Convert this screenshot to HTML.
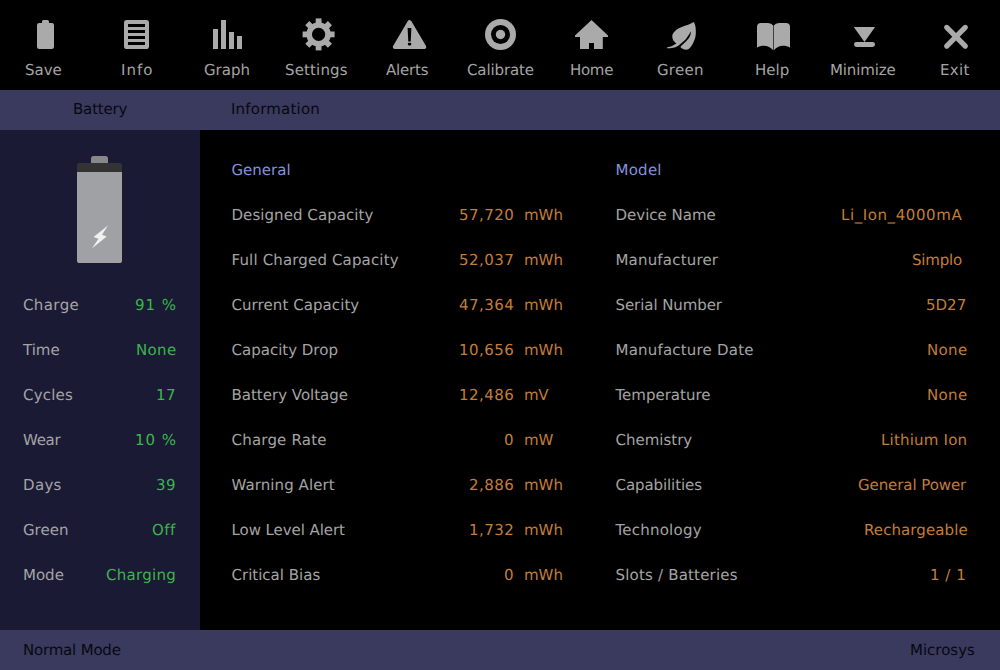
<!DOCTYPE html>
<html><head><meta charset="utf-8"><title>Battery Information</title>
<style>
html,body{margin:0;padding:0;background:#000;}
body{width:1000px;height:670px;position:relative;overflow:hidden;font-family:"DejaVu Sans","Liberation Sans",sans-serif;font-size:15px;color:#a4a4a4;text-rendering:geometricPrecision;}
.t{position:absolute;white-space:nowrap;line-height:20px;height:20px;}
#top{position:absolute;left:0;top:0;width:1000px;height:90px;background:#000;}
#hdr{position:absolute;left:0;top:90px;width:1000px;height:40px;background:#393a5e;}
#side{position:absolute;left:0;top:130px;width:200px;height:500px;background:#1a1a35;}
#main{position:absolute;left:200px;top:130px;width:800px;height:500px;background:#000;}
#foot{position:absolute;left:0;top:630px;width:1000px;height:40px;background:#393a5e;}
svg{position:absolute;overflow:visible;}
.g{color:#3bb54a}.o{color:#c27d3a}.b{color:#8292dd}.d{color:#08080f}
</style></head><body>
<div id="top"></div><div id="hdr"></div><div id="side"></div><div id="main"></div><div id="foot"></div>

<nav class="toolbar">
<div class="t" style="left:25.00px;top:60px;">Save</div>
<div class="t" style="left:121.00px;top:60px;letter-spacing:1.00px;">Info</div>
<div class="t" style="left:204.00px;top:60px;">Graph</div>
<div class="t" style="left:285.00px;top:60px;letter-spacing:0.14px;">Settings</div>
<div class="t" style="left:386.00px;top:60px;letter-spacing:-0.20px;">Alerts</div>
<div class="t" style="left:467.00px;top:60px;letter-spacing:-0.12px;">Calibrate</div>
<div class="t" style="left:570.00px;top:60px;letter-spacing:-0.30px;">Home</div>
<div class="t" style="left:657.00px;top:60px;letter-spacing:0.25px;">Green</div>
<div class="t" style="left:755.00px;top:60px;">Help</div>
<div class="t" style="left:830.00px;top:60px;letter-spacing:-0.14px;">Minimize</div>
<div class="t" style="left:940.00px;top:60px;letter-spacing:0.33px;">Exit</div>
</nav>
<header class="titlebar">
<div class="t d" style="left:73.00px;top:99px;letter-spacing:-0.17px;">Battery</div>
<div class="t d" style="left:231.00px;top:99px;letter-spacing:0.20px;">Information</div>
</header>
<footer class="statusbar">
<div class="t d" style="left:23.00px;top:640px;letter-spacing:-0.20px;">Normal Mode</div>
<div class="t d" style="left:910.00px;top:640px;">Microsys</div>
</footer>
<aside class="sidebar">
<div class="t" style="left:23.00px;top:295px;letter-spacing:0.40px;">Charge</div>
<div class="t g" style="left:135.00px;top:295px;letter-spacing:1.00px;">91 %</div>
<div class="t" style="left:23.00px;top:340px;">Time</div>
<div class="t g" style="left:136.00px;top:340px;letter-spacing:0.33px;">None</div>
<div class="t" style="left:23.00px;top:385px;letter-spacing:0.20px;">Cycles</div>
<div class="t g" style="left:156.00px;top:385px;letter-spacing:0.46px;">17</div>
<div class="t" style="left:23.00px;top:430px;letter-spacing:-0.30px;">Wear</div>
<div class="t g" style="left:135.00px;top:430px;letter-spacing:1.00px;">10 %</div>
<div class="t" style="left:23.00px;top:475px;letter-spacing:0.33px;">Days</div>
<div class="t g" style="left:156.00px;top:475px;letter-spacing:0.46px;">39</div>
<div class="t" style="left:23.00px;top:520px;">Green</div>
<div class="t g" style="left:152.00px;top:520px;letter-spacing:0.50px;">Off</div>
<div class="t" style="left:23.00px;top:565px;">Mode</div>
<div class="t g" style="left:106.00px;top:565px;letter-spacing:0.29px;">Charging</div>
</aside>
<main class="info">
<div class="t b" style="left:231.50px;top:160px;">General</div>
<div class="t b" style="left:615.50px;top:160px;letter-spacing:0.25px;">Model</div>
<div class="t" style="left:231.50px;top:205px;letter-spacing:0.06px;">Designed Capacity</div>
<div class="t o" style="left:459.00px;top:205px;letter-spacing:0.46px;">57,720</div>
<div class="t o" style="left:524.00px;top:205px;">mWh</div>
<div class="t" style="left:231.50px;top:250px;letter-spacing:0.15px;">Full Charged Capacity</div>
<div class="t o" style="left:459.00px;top:250px;letter-spacing:0.46px;">52,037</div>
<div class="t o" style="left:524.00px;top:250px;">mWh</div>
<div class="t" style="left:231.50px;top:295px;letter-spacing:0.07px;">Current Capacity</div>
<div class="t o" style="left:459.00px;top:295px;letter-spacing:0.46px;">47,364</div>
<div class="t o" style="left:524.00px;top:295px;">mWh</div>
<div class="t" style="left:231.50px;top:340px;">Capacity Drop</div>
<div class="t o" style="left:459.00px;top:340px;letter-spacing:0.46px;">10,656</div>
<div class="t o" style="left:524.00px;top:340px;">mWh</div>
<div class="t" style="left:231.50px;top:385px;">Battery Voltage</div>
<div class="t o" style="left:459.00px;top:385px;letter-spacing:0.46px;">12,486</div>
<div class="t o" style="left:524.00px;top:385px;letter-spacing:-0.30px;">mV</div>
<div class="t" style="left:231.50px;top:430px;letter-spacing:0.20px;">Charge Rate</div>
<div class="t o" style="left:504.00px;top:430px;letter-spacing:0.46px;">0</div>
<div class="t o" style="left:524.00px;top:430px;">mW</div>
<div class="t" style="left:231.50px;top:475px;letter-spacing:0.08px;">Warning Alert</div>
<div class="t o" style="left:469.00px;top:475px;letter-spacing:0.46px;">2,886</div>
<div class="t o" style="left:524.00px;top:475px;">mWh</div>
<div class="t" style="left:231.50px;top:520px;letter-spacing:-0.07px;">Low Level Alert</div>
<div class="t o" style="left:469.00px;top:520px;letter-spacing:0.46px;">1,732</div>
<div class="t o" style="left:524.00px;top:520px;">mWh</div>
<div class="t" style="left:231.50px;top:565px;">Critical Bias</div>
<div class="t o" style="left:504.00px;top:565px;letter-spacing:0.46px;">0</div>
<div class="t o" style="left:524.00px;top:565px;">mWh</div>
<div class="t" style="left:615.50px;top:205px;">Device Name</div>
<div class="t o" style="left:841.00px;top:205px;letter-spacing:0.58px;">Li_Ion_4000mA</div>
<div class="t" style="left:615.50px;top:250px;letter-spacing:0.18px;">Manufacturer</div>
<div class="t o" style="left:912.00px;top:250px;letter-spacing:-0.20px;">Simplo</div>
<div class="t" style="left:615.50px;top:295px;letter-spacing:-0.08px;">Serial Number</div>
<div class="t o" style="left:926.00px;top:295px;">5D27</div>
<div class="t" style="left:615.50px;top:340px;letter-spacing:0.20px;">Manufacture Date</div>
<div class="t o" style="left:927.00px;top:340px;letter-spacing:0.33px;">None</div>
<div class="t" style="left:615.50px;top:385px;">Temperature</div>
<div class="t o" style="left:927.00px;top:385px;letter-spacing:0.33px;">None</div>
<div class="t" style="left:615.50px;top:430px;">Chemistry</div>
<div class="t o" style="left:881.00px;top:430px;letter-spacing:0.20px;">Lithium Ion</div>
<div class="t" style="left:615.50px;top:475px;letter-spacing:-0.09px;">Capabilities</div>
<div class="t o" style="left:858.00px;top:475px;letter-spacing:-0.08px;">General Power</div>
<div class="t" style="left:615.50px;top:520px;letter-spacing:0.22px;">Technology</div>
<div class="t o" style="left:864.00px;top:520px;letter-spacing:0.09px;">Rechargeable</div>
<div class="t" style="left:615.50px;top:565px;letter-spacing:0.19px;">Slots / Batteries</div>
<div class="t o" style="left:930.00px;top:565px;letter-spacing:0.50px;">1 / 1</div>
</main>
<svg width="1000" height="90" style="left:0;top:0" viewBox="0 0 1000 90" fill="#aaaaaa">
<!-- save -->
<rect x="37" y="23" width="17" height="26" rx="2.2"/>
<rect x="42" y="20" width="7" height="5" rx="1.6"/>
<!-- info -->
<rect x="124" y="20" width="25" height="29" rx="2.8"/>
<g fill="#000"><rect x="128" y="24" width="17" height="3"/><rect x="128" y="30" width="17" height="3"/><rect x="128" y="36" width="17" height="3"/><rect x="128" y="42" width="17" height="3"/></g>
<!-- graph -->
<rect x="213" y="29" width="5" height="20"/><rect x="221" y="20" width="5" height="29"/><rect x="229" y="32" width="5" height="17"/><rect x="237" y="36" width="5" height="13"/>
<!-- settings -->
<g transform="translate(318.6 34.4)">
<circle r="12.2"/>
<g id="gt"><rect x="-2.9" y="-16" width="5.8" height="32"/></g>
<use href="#gt" transform="rotate(45)"/><use href="#gt" transform="rotate(90)"/><use href="#gt" transform="rotate(135)"/>
<circle r="6.6" fill="#000"/>
</g>
<!-- alerts -->
<path d="M409.55,22.1 L424.3,47.1 L394.8,47.1 Z" stroke="#aaaaaa" stroke-width="4" stroke-linejoin="round"/>
<path d="M407.6,28 L411.4,28 L410.7,41.4 L408.3,41.4 Z" fill="#000"/>
<rect x="407.9" y="42.8" width="3.3" height="2.6" rx="0.8" fill="#000"/>
<!-- calibrate -->
<circle cx="500.5" cy="34.5" r="15.5"/><circle cx="500.5" cy="34.5" r="9.5" fill="#000"/><circle cx="500.5" cy="34.5" r="4.7"/>
<!-- home -->
<path d="M591.5,20 L608,35.5 L608,37 L602.8,37 L602.8,49 L594,49 L594,43 L589,43 L589,49 L580,49 L580,37 L575,37 L575,35.5 Z"/>
<!-- green -->
<path d="M693.80,22.00 C692.87,22.45 690.22,23.88 688.20,24.70 C686.18,25.52 683.67,26.05 681.70,26.90 C679.73,27.75 677.83,28.68 676.40,29.80 C674.97,30.92 673.78,32.43 673.10,33.60 C672.42,34.77 672.25,35.63 672.30,36.80 C672.35,37.97 672.72,39.47 673.40,40.60 C674.08,41.73 675.90,43.10 676.40,43.60 C675.68,43.98 673.63,45.33 672.10,45.90 C670.57,46.47 668.02,46.82 667.20,47.00 L667.50,48.40 C668.43,48.30 671.45,48.17 673.10,47.80 C674.75,47.43 676.23,46.78 677.40,46.20 C678.57,45.62 678.75,45.42 680.10,44.30 C681.45,43.18 683.97,41.20 685.50,39.50 C687.03,37.80 688.43,35.48 689.30,34.10 C690.17,32.72 690.47,31.68 690.70,31.20 C690.65,31.82 690.93,33.47 690.40,34.90 C689.87,36.33 688.78,38.18 687.50,39.80 C686.22,41.42 683.90,43.42 682.70,44.60 C681.50,45.78 680.70,46.52 680.30,46.90 C680.63,47.18 681.43,48.12 682.30,48.60 C683.17,49.08 684.33,49.80 685.50,49.80 C686.67,49.80 688.05,49.68 689.30,48.60 C690.55,47.52 691.98,45.27 693.00,43.30 C694.02,41.33 694.93,38.95 695.40,36.80 C695.87,34.65 695.83,32.28 695.80,30.40 C695.77,28.52 695.53,26.90 695.20,25.50 C694.87,24.10 694.03,22.58 693.80,22.00 Z"/>
<!-- help -->
<path d="M757,47.6 L757,27 Q757,23 761,23 L768,23 Q771.6,23 773.2,25.5 L773.2,50.2 C770,46 763,44 757,47.6 Z"/>
<path d="M790,47.6 L790,27 Q790,23 786,23 L779,23 Q775.4,23 773.8,25.5 L773.8,50.2 C777,46 784,44 790,47.6 Z"/>
<!-- minimize -->
<path d="M853.8,27 L875.1,27 L864.45,42 Z"/>
<rect x="854" y="42.1" width="21" height="4.8" rx="2.4"/>
<!-- exit -->
<path d="M946.7,27.4 L965.3,46.1 M965.3,27.4 L946.7,46.1" stroke="#aaaaaa" stroke-width="5.2" stroke-linecap="round" fill="none"/>
</svg>
<svg width="200" height="140" style="left:0;top:130px" viewBox="0 130 200 140">
<rect x="91" y="156" width="17" height="10" rx="2.6" fill="#87888c"/>
<path d="M77,172.4 L77,165.6 Q77,163 79.6,163 L119.4,163 Q122,163 122,165.6 L122,172.4 Z" fill="#333333"/>
<path d="M77,172 L122,172 L122,260.4 Q122,263 119.4,263 L79.6,263 Q77,263 77,260.4 Z" fill="#a0a1a5"/>
<path d="M108,225.4 L93.5,236.9 L98.5,238.7 L91.9,248.5 L106.7,236.4 L102,234.7 Z" fill="#f0f0f0"/>
</svg>

</body></html>
